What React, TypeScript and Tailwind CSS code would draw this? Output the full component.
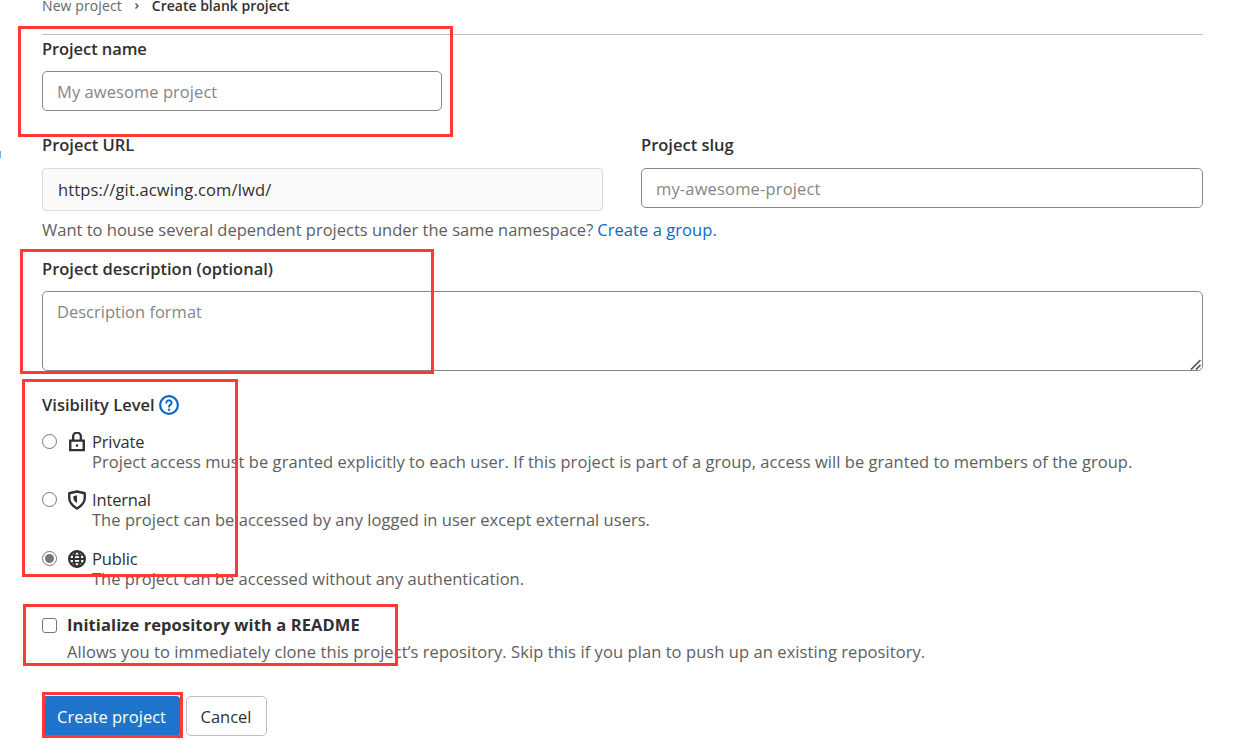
import type { ReactNode } from "react";

function Label({ children, className = "" }: { children: ReactNode; className?: string }) {
  return (
    <div className={`h-6 whitespace-nowrap text-[16.5px] leading-6 font-semibold text-[#303030] ${className}`}>
      {children}
    </div>
  );
}

function QuestionIcon() {
  return (
    <svg width="20" height="20" viewBox="0 0 16 16" fill="none" stroke="#1068bf" strokeLinecap="round">
      <circle cx="8" cy="8" r="7.1" strokeWidth="1.8" />
      <path d="M5.9 6.2a2.1 1.9 0 1 1 3.3 1.5C8.4 8.2 8 8.5 8 9.3" strokeWidth="1.5" />
      <circle cx="8" cy="11.8" r="0.95" fill="#1068bf" stroke="none" />
    </svg>
  );
}

function LockIcon() {
  return (
    <svg width="20" height="20" viewBox="0 0 16 16" fill="none" stroke="#303030" strokeWidth="1.9">
      <path d="M2.6 6.9h10.8v7.6H2.6z" />
      <path d="M4.9 6.6V3.6a3.1 3.1 0 0 1 6.2 0v3" />
      <circle cx="8" cy="10.7" r="1" fill="#303030" stroke="none" />
    </svg>
  );
}

function ShieldIcon() {
  return (
    <svg width="20" height="20" viewBox="0 0 16 16" fill="none">
      <path
        d="M8 1.2 14.2 2.6v3.9c0 3.4-2.6 6-6.2 8.4-3.6-2.4-6.2-5-6.2-8.4V2.6z"
        stroke="#303030"
        strokeWidth="1.9"
        strokeLinejoin="round"
      />
      <path d="M8 4.2v6.2C6.2 9.3 5.1 8.1 5.1 6.4V5z" fill="#303030" />
    </svg>
  );
}

function EarthIcon() {
  return (
    <svg width="20" height="20" viewBox="0 0 16 16" fill="none" stroke="#303030" strokeWidth="1.6">
      <circle cx="8" cy="8" r="6.3" strokeWidth="1.8" />
      <ellipse cx="8" cy="8" rx="2.6" ry="6.2" />
      <path d="M2 8h12" />
      <path d="M3 4.4c3 .9 7 .9 10 0M3 11.6c3-.9 7-.9 10 0" strokeWidth="1.1" />
    </svg>
  );
}

function Level({ icon, title, checked = false, children, className = "", descClass }: {
  icon: ReactNode; title: string; checked?: boolean; children: ReactNode; className?: string; descClass: string;
}) {
  return (
    <div className={className}>
      <div className="flex h-5 items-center">
        <span className="mt-[2px] flex size-[15px] items-center justify-center self-start rounded-full border border-[#767676] bg-white">
          {checked && <span className="size-[9px] rounded-full bg-[#767676]" />}
        </span>
        <span className="ml-[10px] size-5">{icon}</span>
        <span className="ml-[5px] text-[16.5px] leading-5 tracking-[-0.15px] text-[#303030]">{title}</span>
      </div>
      <div className={`h-5 pl-[50px] text-[16.5px] leading-5 whitespace-nowrap text-[#5e5e5e] ${descClass}`}>{children}</div>
    </div>
  );
}

export default function App() {
  return (
    <div className="relative h-[755px] w-[1256px] overflow-hidden bg-white font-['Open_Sans',sans-serif] text-[16.5px]">
      <main className="flex w-[1203px] flex-col pl-[42px]">
        <nav className="-mt-[6px] flex h-6 items-center text-[14px] leading-6 whitespace-nowrap">
          <span className="tracking-[0.1px] text-[#666666]">New project</span>
          <svg className="ml-[12px]" width="6" height="8" viewBox="0 0 6 8" fill="none" stroke="#525252" strokeWidth="1.4">
            <path d="M1.5 1.5 4 4 1.5 6.5" />
          </svg>
          <span className="ml-[12px] font-semibold text-[#303030]">Create blank project</span>
        </nav>
        <div className="mt-4 h-px bg-[#bfbfbf]" />

        <Label className="mt-[2px] tracking-[-0.08px]">Project name</Label>
        <div className="mt-[10px] h-10 w-[400px] rounded-[5px] border border-[#868686] px-[14px] text-[16.5px] leading-[39px] tracking-[0.06px] text-[#868686]">
          My awesome project
        </div>

        <div className="mt-[22px] flex justify-between">
          <div className="w-[561px]">
            <Label>Project URL</Label>
            <div className="mt-[11px] h-[43px] rounded-[4px] border border-[#dbdbdb] bg-[#fafafa] px-[15px] text-[16.5px] leading-[41px] tracking-[0.15px] text-[#303030]">
              https://git.acwing.com/lwd/
            </div>
          </div>
          <div className="w-[562px]">
            <Label>Project slug</Label>
            <div className="mt-[11px] h-10 rounded-[5px] border border-[#868686] px-[14px] text-[16.5px] leading-[39px] tracking-[0.16px] text-[#868686]">
              my-awesome-project
            </div>
          </div>
        </div>
        <div className="mt-[7px] flex h-6 text-[16.5px] leading-6 whitespace-nowrap text-[#5e5e5e]">
          <span>Want to house several dependent projects under the same namespace?</span>
          <a className="ml-[4px] tracking-[0.06px] text-[#1068bf]">Create a group.</a>
        </div>

        <Label className="mt-[15px]">Project description (optional)</Label>
        <div className="mt-[10px] flex h-20 justify-between rounded-[5px] border border-[#868686] pl-[14px] text-[#868686]">
          <span className="leading-[39px]">Description format</span>
          <svg className="self-end" width="12" height="12" viewBox="0 0 12 12" stroke="#525252" strokeWidth="1.7">
            <path d="M1 11.5 10.5 2M6 11.5l4.5-4.5" />
          </svg>
        </div>

        <div className="mt-[22px] flex items-center">
          <Label>Visibility Level</Label>
          <span className="ml-[4px]"><QuestionIcon /></span>
        </div>
        <Level className="mt-[15px]" icon={<LockIcon />} title="Private" descClass="tracking-[0.052px]">
          Project access must be granted explicitly to each user. If this project is part of a group, access will be granted to members of the group.
        </Level>
        <Level className="mt-[18px]" icon={<ShieldIcon />} title="Internal" descClass="tracking-[0.03px]">
          The project can be accessed by any logged in user except external users.
        </Level>
        <Level className="mt-[19px]" icon={<EarthIcon />} title="Public" checked descClass="tracking-[0.02px]">
          The project can be accessed without any authentication.
        </Level>

        <div className="mt-[24px] flex items-center">
          <span className="size-[15px] rounded-[3px] border border-[#767676]" />
          <div className="ml-[10px] h-6 text-[16.5px] leading-6 font-bold tracking-[0.09px] whitespace-nowrap text-[#303030]">Initialize repository with a README</div>
        </div>
        <div className="mt-[3px] h-6 pl-[25px] leading-6 tracking-[0.07px] whitespace-nowrap text-[#5e5e5e]">
          Allows you to immediately clone this project’s repository. Skip this if you plan to push up an existing repository.
        </div>

        <div className="mt-8 flex gap-[5px] text-[16.5px]">
          <button className="h-10 w-[139px] rounded-[5px] bg-[#1f75cb] pt-[2px] text-white">Create project</button>
          <button className="h-10 w-[81px] rounded-[5px] border border-[#bfbfbf] bg-white pt-[2px] pr-px text-[#303030]">Cancel</button>
        </div>
      </main>

      <div className="absolute top-[151px] left-0 h-[7px] w-px bg-[#6fb3f2]" />
      <div className="absolute top-[26px] left-[18px] h-[111px] w-[435px] border-3 border-[#ff3838]" />
      <div className="absolute top-[249px] left-[20px] h-[125px] w-[414px] border-3 border-[#ff3838]" />
      <div className="absolute top-[379px] left-[22px] h-[198px] w-[216px] border-3 border-[#ff3838]" />
      <div className="absolute top-[604px] left-[23px] h-[62px] w-[375px] border-3 border-[#ff3838]" />
      <div className="absolute top-[692px] left-[42px] h-[46px] w-[141px] border-3 border-[#ff3838]" />
    </div>
  );
}
